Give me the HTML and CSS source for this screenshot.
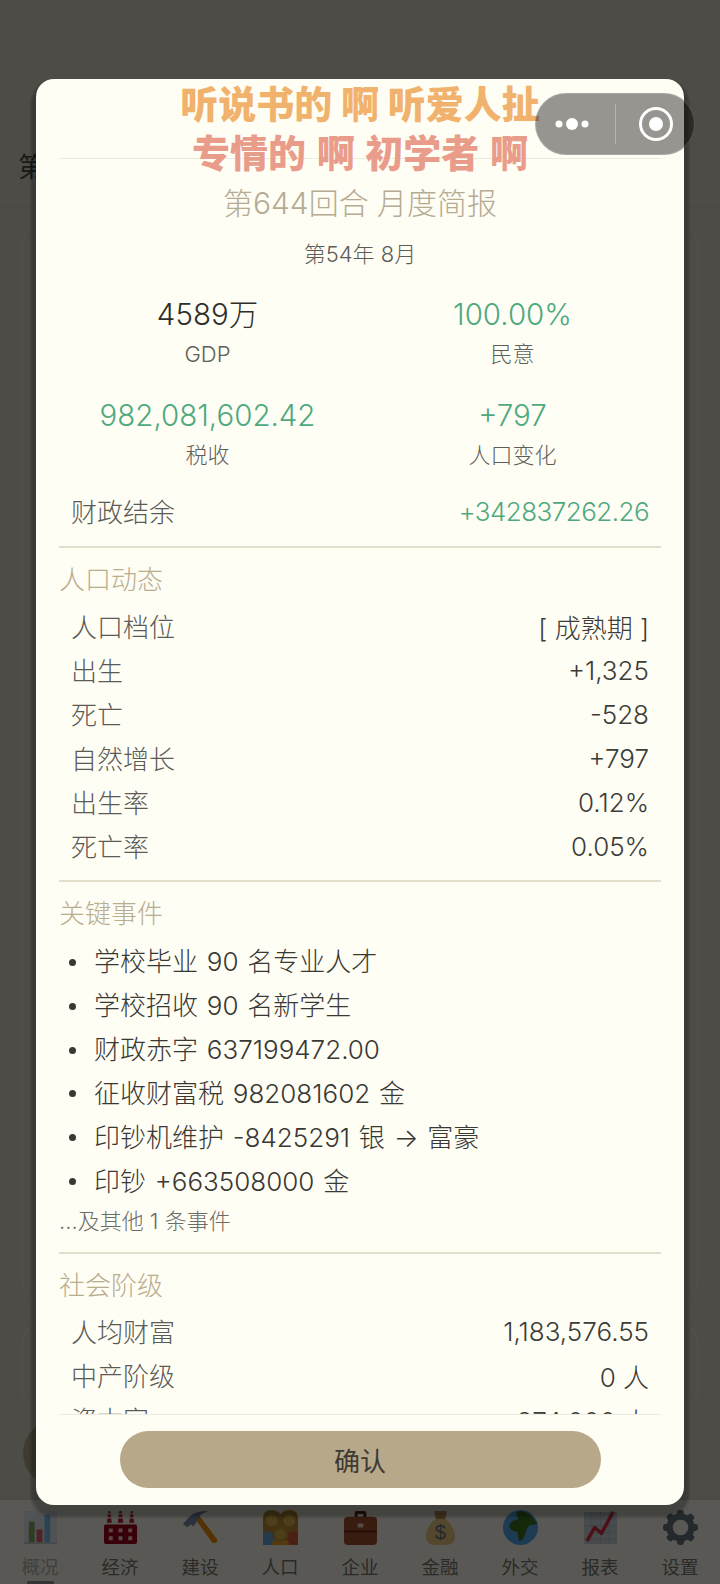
FILE: index.html
```html
<!DOCTYPE html>
<html lang="zh-CN">
<head>
<meta charset="utf-8">
<title>月度简报</title>
<link rel="stylesheet" href="styles.css">
</head>
<body>
<div class="page">
  <div class="top"></div>
  <header class="head">第644回合</header>
  <main class="cards">
    <section class="card card-main"></section>
    <section class="card card-second"></section>
  </main>
  <nav class="tabbar">
    <div class="tab tab-active">
      <svg class="tab-icon" viewBox="0 0 36 36"><rect x="1" y="1" width="34" height="34" fill="#dfe7ec"/><path d="M1 34h34" stroke="#8899a6" stroke-width="1"/><rect x="6" y="12" width="6" height="21" fill="#5c913b"/><rect x="14" y="20" width="6" height="13" fill="#dd2e44"/><rect x="22" y="5" width="6" height="28" fill="#55acee"/></svg>
      <span class="tab-label">概况</span>
      <i class="tab-mark"></i>
    </div>
    <div class="tab">
      <svg class="tab-icon" viewBox="0 0 36 36"><path d="M4 13l1.600-12h1.800L9 13zM15.200 13l1.600-12h2.400L20.800 13zM27 13l1.600-12h1.800L32 13z" fill="#be1931"/><path d="M4 4h5M15 4h6M27 4h5M4 8h5M15 8h6M27 8h5" stroke="#ffdfe0" stroke-width="1.400"/><path d="M1 17q0-2 2-2h30q2 0 2 2v16q0 2-2 2H3q-2 0-2-2z" fill="#a0041e"/><path d="M6 19h4v4H6zM16 19h4v4h-4zM26 19h4v4h-4zM6 27h4v4H6zM16 27h4v4h-4zM26 27h4v4h-4z" fill="#ffcfd4"/></svg>
      <span class="tab-label">经济</span>
    </div>
    <div class="tab">
      <svg class="tab-icon" viewBox="0 0 36 36"><path d="M13 10l4-4 18 24q1 2-1 3.500t-4 0z" fill="#f4900c"/><path d="M3 11Q9 1 24 1q1 0 0 1-7 2-8 7l-5 8-3-2-4 3-4-4z" fill="#7b90aa"/></svg>
      <span class="tab-label">建设</span>
    </div>
    <div class="tab">
      <svg class="tab-icon" viewBox="0 0 36 36"><path d="M0 21h14v15H0z" fill="#6aa6d8"/><path d="M22 21h14v15H22z" fill="#d8603c"/><path d="M0 8q0-8 9-8 5 0 9 4 4-4 9-4 9 0 9 8v12q-2 3-9 3H9q-7 0-9-3z" fill="#ba8a34"/><circle cx="9" cy="11" r="6" fill="#d9b64a"/><circle cx="27" cy="11" r="6" fill="#d9b64a"/><path d="M9 36q0-7 9-7t9 7z" fill="#e7a32e"/><path d="M10 23q0-7 8-7t8 7v5q-3 4-8 4t-8-4z" fill="#c79435"/><circle cx="18" cy="25" r="5.500" fill="#d9b64a"/></svg>
      <span class="tab-label">人口</span>
    </div>
    <div class="tab">
      <svg class="tab-icon" viewBox="0 0 36 36"><path d="M12 8V3q0-2 2-2h8q2 0 2 2v5h-3V4h-6v4z" fill="#662113"/><path d="M1 11q0-4 4-4h26q4 0 4 4v21q0 4-4 4H5q-4 0-4-4z" fill="#a0522d"/><path d="M1 21h34v2H1z" fill="#662113"/><rect x="15" y="14" width="6" height="4" rx="1" fill="#f5d6c0"/></svg>
      <span class="tab-label">企业</span>
    </div>
    <div class="tab">
      <svg class="tab-icon" viewBox="0 0 36 36"><path d="M12 1h12v5l-2 3h-8l-2-3z" fill="#c1945a"/><path d="M14 8h8q11 10 11 19 0 9-10 9H13Q3 36 3 27 3 18 14 8z" fill="#eecb85"/><path d="M13 8h10" stroke="#b78b4a" stroke-width="2"/><text class="bag-sign" x="18" y="30" text-anchor="middle">$</text></svg>
      <span class="tab-label">金融</span>
    </div>
    <div class="tab">
      <svg class="tab-icon" viewBox="0 0 36 36"><circle cx="18" cy="18" r="18" fill="#55acee"/><path d="M14 2q7-2 13 2l8 9q1 2-3 2l-5 1q-3 3-4 8-2 7-6 8-2-4-2-9-5-1-8-4-2-4 3-8 4-1 6-2-3-3-2-7z" fill="#3e721d"/></svg>
      <span class="tab-label">外交</span>
    </div>
    <div class="tab">
      <svg class="tab-icon" viewBox="0 0 36 36"><rect x="1" y="2" width="34" height="33" fill="#ccd6dd"/><path d="M1 9h34M1 16h34M1 23h34M1 30h34M9 2v33M18 2v33M27 2v33" stroke="#b4c0c9" stroke-width=".8"/><path d="M4 32l8-14 7 6L31 2" fill="none" stroke="#dd2e44" stroke-width="3.600" stroke-linejoin="round"/></svg>
      <span class="tab-label">报表</span>
    </div>
    <div class="tab">
      <svg class="tab-icon" viewBox="0 0 36 36"><g fill="#66757f"><rect x="14.500" y="0" width="7" height="36" rx="2.500"/><rect x="14.500" y="0" width="7" height="36" rx="2.500" transform="rotate(45 18 18)"/><rect x="14.500" y="0" width="7" height="36" rx="2.500" transform="rotate(90 18 18)"/><rect x="14.500" y="0" width="7" height="36" rx="2.500" transform="rotate(135 18 18)"/></g><circle cx="18" cy="18" r="11" fill="none" stroke="#66757f" stroke-width="7"/><circle cx="18" cy="18" r="8" fill="#fffdf2"/></svg>
      <span class="tab-label">设置</span>
    </div>
  </nav>
  <div class="fab"></div>
</div>

<div class="mask"></div>

<div class="modal">
  <div class="modal-top"></div>
  <div class="modal-scroll">
    <h1 class="title">第644回合 月度简报</h1>
    <p class="subtitle">第54年 8月</p>
    <div class="stats">
      <div class="stat"><div class="stat-value">4589万</div><div class="stat-label">GDP</div></div>
      <div class="stat"><div class="stat-value good">100.00%</div><div class="stat-label">民意</div></div>
      <div class="stat"><div class="stat-value good">982,081,602.42</div><div class="stat-label">税收</div></div>
      <div class="stat"><div class="stat-value good">+797</div><div class="stat-label">人口变化</div></div>
    </div>
    <div class="row row-balance"><span class="row-label">财政结余</span><span class="row-value good row-long">+342837262.26</span></div>
    <div class="section">
      <h2 class="section-title">人口动态</h2>
      <div class="row"><span class="row-label">人口档位</span><span class="row-value">[ 成熟期 ]</span></div>
      <div class="row"><span class="row-label">出生</span><span class="row-value">+1,325</span></div>
      <div class="row"><span class="row-label">死亡</span><span class="row-value">-528</span></div>
      <div class="row"><span class="row-label">自然增长</span><span class="row-value">+797</span></div>
      <div class="row"><span class="row-label">出生率</span><span class="row-value">0.12%</span></div>
      <div class="row"><span class="row-label">死亡率</span><span class="row-value">0.05%</span></div>
    </div>
    <div class="section">
      <h2 class="section-title">关键事件</h2>
      <ul class="events">
        <li class="event">学校毕业 90 名专业人才</li>
        <li class="event">学校招收 90 名新学生</li>
        <li class="event">财政赤字 637199472.00</li>
        <li class="event">征收财富税 982081602 金</li>
        <li class="event">印钞机维护 -8425291 银 → 富豪</li>
        <li class="event">印钞 +663508000 金</li>
      </ul>
      <p class="more">...及其他 1 条事件</p>
    </div>
    <div class="section">
      <h2 class="section-title section-title-tight">社会阶级</h2>
      <div class="row"><span class="row-label">人均财富</span><span class="row-value">1,183,576.55</span></div>
      <div class="row"><span class="row-label">中产阶级</span><span class="row-value">0 人</span></div>
      <div class="row"><span class="row-label">资本家</span><span class="row-value">874,000 人</span></div>
    </div>
  </div>
  <div class="modal-foot"><button class="confirm">确认</button></div>
</div>

<div class="lyric">
  <div class="lyric-one">听说书的 啊 听爱人扯</div>
  <div class="lyric-two">专情的 啊 初学者 啊</div>
</div>

<div class="capsule">
  <svg class="capsule-dots" viewBox="0 0 40 14"><circle cx="7" cy="7" r="3.500"/><circle cx="20" cy="7" r="6"/><circle cx="33" cy="7" r="3.500"/></svg>
  <i class="capsule-line"></i>
  <svg class="capsule-rec" viewBox="0 0 36 36"><circle cx="18" cy="18" r="15.500" fill="none" stroke="#fff" stroke-width="3"/><circle cx="18" cy="18" r="7"/></svg>
</div>
</body>
</html>
```

FILE: styles.css
```css
* { box-sizing: border-box; }
html, body { margin: 0; padding: 0; }
body {
  width: 720px;
  height: 1584px;
  overflow: hidden;
  font-family: Inter, "Noto Sans CJK SC", sans-serif;
  font-weight: 300;
  position: relative;
  background: #dcd9cb;
}
.page { height: 1584px; display: flex; flex-direction: column; background: #dcd9cb; }
.top { height: 132px; flex: none; }
.head {
  height: 69px;
  flex: none;
  padding: 20px 18px 0;
  font-size: 27px;
  line-height: 32px;
  color: #4a4a46;
  font-weight: 400;
  border-bottom: 1px solid #e6e3d6;
  background: #dcd9cb;
}
.cards {
  flex: 1;
  padding: 24px 22px 0;
  display: flex;
  flex-direction: column;
  gap: 22px;
  min-height: 0;
}
.card { border: 1px solid #ebe8dc; border-bottom: 0; border-radius: 20px; }
.card-main { height: 1076px; border-bottom: 1px solid #ebe8dc; }
.card-second { height: 86px; }
.tabbar {
  height: 85px;
  flex: none;
  display: grid;
  grid-template-columns: repeat(9, 80px);
  background: #fffdf0;
  border-top: 1px solid #d5d2c4;
}
.tab { display: flex; flex-direction: column; align-items: center; padding-top: 10px; position: relative; }
.tab-icon { width: 35px; height: 35px; display: block; }
.tab-label { font-size: 18.5px; line-height: 26px; margin-top: 9px; color: #7a7a72; font-weight: 400; }
.tab-active .tab-label { color: #b5b5aa; }
.tab-active .tab-icon { opacity: .75; }
.tab-mark {
  position: absolute; left: 27px; bottom: 0; width: 27px; height: 3px; background: #999;
}
.bag-sign { font-size: 21px; fill: #67757f; font-family: "Liberation Sans", sans-serif; }
.fab {
  position: absolute; left: 23px; top: 1420px;
  width: 66px; height: 66px; border-radius: 50%;
  background: #b5a98e;
}
.mask { position: absolute; inset: 0; background: rgba(0, 0, 0, .65); }

.modal {
  position: absolute; left: 36px; top: 79px;
  width: 648px; height: 1426px;
  background: #fffef5;
  border-radius: 18px;
  box-shadow: 0 7px 3px 5px rgba(0, 0, 0, .25);
  display: flex; flex-direction: column;
}
.modal-top { height: 80px; flex: none; margin: 0 23px; border-bottom: 1px solid #ecebdf; }
.modal-scroll { flex: 1; min-height: 0; overflow: hidden; padding: 0 23px; }
.modal-foot {
  height: 91px; flex: none; margin: 0 23px;
  border-top: 1px solid #ecebdf;
  padding-top: 16px;
  display: flex; justify-content: center; align-items: flex-start;
}
.title {
  margin: 22px 0 0; text-align: center;
  font-size: 30px; line-height: 44px; font-weight: 300; color: #b5ab93;
}
.subtitle {
  margin: 13px 0 0; text-align: center;
  font-size: 22px; line-height: 32px; color: #5c5c58;
}
.stats {
  margin-top: 24px;
  display: grid;
  grid-template-columns: 297px 297px;
  column-gap: 8px;
  row-gap: 26px;
  text-align: center;
}
.stat-value { font-size: 29.5px; line-height: 40px; color: #2e2e2b; }
.stat-label { font-size: 22px; line-height: 30px; margin-top: 5px; color: #5e5e5a; }
.stat-value.good, .row-value.good { color: #4fa97f; }
.row {
  display: flex; justify-content: space-between; align-items: center;
  height: 43.9px; padding: 0 12px;
  font-size: 26px;
}
.row-label { color: #5a5a56; padding-bottom: 4px; }
.row-value { color: #3c3c38; padding-bottom: 2px; }
.row-long { letter-spacing: -.55px; }
.row-balance { margin-top: 21px; }
.section { border-top: 2px solid #e4dfcd; margin-top: 11px; padding-top: 14px; }
.section-title {
  margin: 0 0 8px; font-size: 26px; line-height: 36px; font-weight: 300; color: #b9ad90;
}
.section-title-tight { margin-bottom: 7px; }
.events { list-style: none; margin: 0; padding: 0; }
.event {
  height: 43.9px; line-height: 43.9px; padding-left: 35px;
  font-size: 26px; color: #383834; position: relative;
  word-spacing: 1.5px;
}
.event::before {
  content: ""; position: absolute; left: 9.5px; top: 18.5px;
  width: 7px; height: 7px; border-radius: 50%; background: #383834;
}
.more { margin: 2px 0 0; padding-bottom: 5px; font-size: 22px; line-height: 30px; color: #6c6c68; }
.confirm {
  width: 481px; height: 57px; border: 0; border-radius: 29px;
  background: #b8a88a; color: #3d3a33;
  font: 400 26px "Noto Sans CJK SC", sans-serif;
}
.lyric {
  position: absolute; left: 0; right: 0; top: 77px;
  text-align: center;
  font-family: "Noto Sans CJK SC", sans-serif;
  font-size: 38px; line-height: 49px; font-weight: 900;
}
.lyric-one { color: #f0b26c; }
.lyric-two { color: #e99c8a; word-spacing: 2px; }
.capsule {
  position: absolute; left: 535px; top: 93px;
  width: 160px; height: 62px; border-radius: 31px;
  background: rgba(0, 0, 0, .41);
  border: 1px solid rgba(255, 255, 255, .18);
  display: flex; align-items: center;
  padding-left: 16px;
}
.capsule-dots { width: 40px; height: 14px; fill: #fff; }
.capsule-line { width: 1px; height: 40px; margin-left: 23px; background: rgba(255, 255, 255, .3); }
.capsule-rec { width: 36px; height: 36px; margin-left: 22px; fill: #fff; }
```
